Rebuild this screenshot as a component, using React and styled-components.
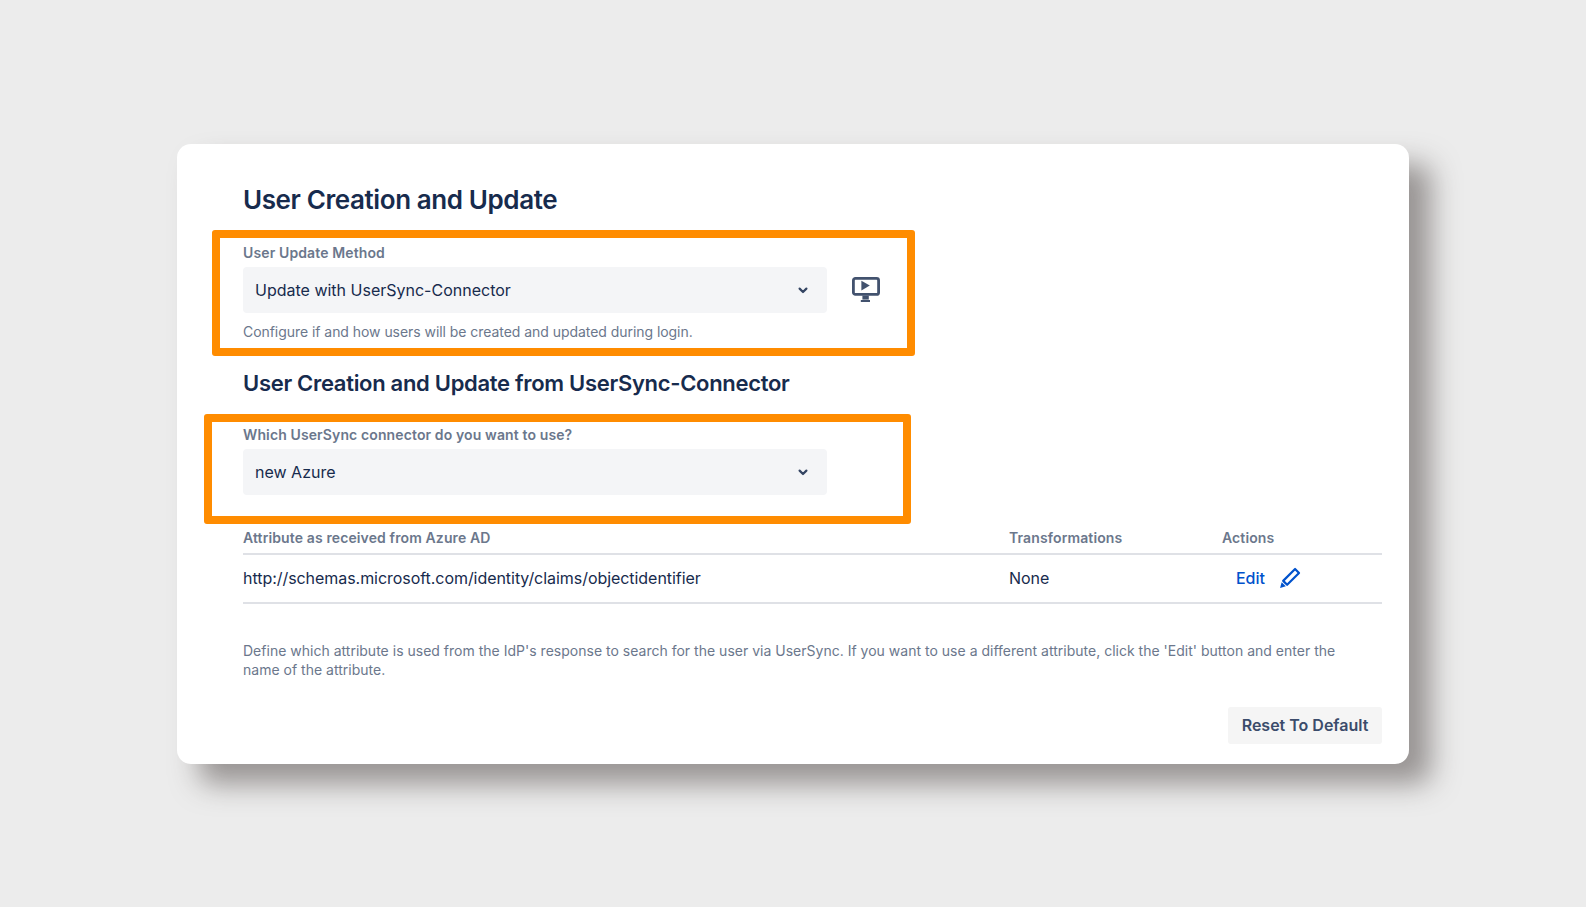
import React from 'react';
import styled, { createGlobalStyle } from 'styled-components';

const GlobalStyle = createGlobalStyle`
  html, body {
    margin: 0;
    padding: 0;
    background: #ececec;
    font-family: Inter, "Liberation Sans", sans-serif;
    color: #172b4d;
    -webkit-font-smoothing: antialiased;
  }
`;

const Page = styled.div`
  min-height: 100vh;
  display: flex;
  align-items: center;
  justify-content: center;
`;

const Card = styled.div`
  width: 1232px;
  height: 620px;
  box-sizing: border-box;
  padding: 36px 27px 0 66px;
  background: #fff;
  border-radius: 14px;
  box-shadow: 22px 20px 28px rgba(70, 62, 60, 0.5);
`;

const Title = styled.h1`
  margin: 0 0 10px;
  font-size: 26px;
  line-height: 40px;
  font-weight: 600;
  letter-spacing: -0.4px;
  color: #172b4d;
`;

const SubTitle = styled.h2`
  margin: 7px 0 11px;
  font-size: 22px;
  line-height: 40px;
  font-weight: 600;
  letter-spacing: -0.3px;
  color: #172b4d;
`;

const Highlight = styled.div`
  box-sizing: border-box;
  width: ${(p) => p.$width}px;
  height: ${(p) => p.$height}px;
  margin-left: -${(p) => p.$inset}px;
  padding-left: ${(p) => p.$inset - 8}px;
  padding-top: ${(p) => p.$top}px;
  border: 8px solid #ff8c00;
  border-radius: 3px;
`;

const FieldLabel = styled.label`
  display: block;
  font-size: 14px;
  line-height: 20px;
  font-weight: 600;
  letter-spacing: 0.12px;
  color: #6b778c;
`;

const FieldRow = styled.div`
  display: flex;
  align-items: center;
  gap: 25px;
  margin-top: 4px;
`;

const SelectBox = styled.div`
  width: 584px;
  height: 46px;
  box-sizing: border-box;
  padding: 0 12px;
  display: flex;
  align-items: center;
  justify-content: space-between;
  background: #f4f5f7;
  border-radius: 4px;
  font-size: 16px;
  color: #172b4d;
`;

const HelpText = styled.p`
  margin: 0;
  font-size: 14px;
  line-height: 19px;
  letter-spacing: -0.05px;
  color: #6b778c;
`;

const FieldHelp = styled(HelpText)`
  margin-top: 9px;
`;

const TableHead = styled.div`
  display: grid;
  grid-template-columns: 766px 213px 1fr;
  height: 25px;
  align-items: start;
  border-bottom: 2px solid #dfe1e6;
  margin-top: 4px;
  font-size: 14px;
  line-height: 20px;
  font-weight: 600;
  letter-spacing: 0.12px;
  color: #6b778c;
`;

const TableRow = styled.div`
  display: grid;
  grid-template-columns: 766px 213px 1fr;
  height: 47px;
  align-items: center;
  border-bottom: 2px solid #dfe1e6;
  font-size: 16px;
  letter-spacing: -0.05px;
  color: #172b4d;
`;

const EditCell = styled.div`
  display: flex;
  align-items: center;
  gap: 14px;
  padding-left: 14px;
`;

const EditLink = styled.a`
  color: #0052cc;
  font-size: 16px;
  font-weight: 500;
`;

const Note = styled(HelpText)`
  margin-top: 37px;
  max-width: 1120px;
  letter-spacing: 0.01px;
`;

const ButtonRow = styled.div`
  display: flex;
  justify-content: flex-end;
  margin-top: 28px;
`;

const Button = styled.button`
  height: 37px;
  width: 154px;
  padding: 0;
  border: 0;
  border-radius: 3px;
  background: #f5f5f5;
  color: #3b4c6b;
  font-family: inherit;
  font-size: 16px;
  font-weight: 600;
`;

const Chevron = () => (
  <svg width="24" height="24" viewBox="0 0 24 24" fill="none">
    <path d="M8.6 10.6 12 14l3.4-3.4" stroke="#344563" strokeWidth="2.2" strokeLinecap="round" strokeLinejoin="round" />
  </svg>
);

const MonitorPlay = () => (
  <svg width="28" height="26" viewBox="0 0 28 26" fill="none">
    <rect x="1.4" y="1.4" width="25.2" height="16" rx="2" stroke="#42526e" strokeWidth="2.8" />
    <path d="M9.4 3.8 17.8 8.6 9.4 13.4z" fill="#42526e" />
    <path d="M10.4 18.6h6.4v4h-6.4z" fill="#42526e" />
    <path d="M8.8 23h9.2v2h-9.2z" fill="#42526e" />
  </svg>
);

const Pencil = () => (
  <svg width="22" height="22" viewBox="0 0 20 20" fill="none">
    <path d="M14.6 1.8 18.2 5.4 7.4 16.2 3.8 12.6z" stroke="#0052cc" strokeWidth="2" strokeLinejoin="round" />
    <path d="M1 19l1.4-5.2 3.8 3.8z" fill="#0052cc" />
  </svg>
);

export default function App() {
  return (
    <>
      <GlobalStyle />
      <Page>
        <Card>
          <Title>User Creation and Update</Title>
          <Highlight $width={703} $height={126} $inset={31} $top={5}>
            <FieldLabel>User Update Method</FieldLabel>
            <FieldRow>
              <SelectBox>
                Update with UserSync-Connector
                <Chevron />
              </SelectBox>
              <MonitorPlay />
            </FieldRow>
            <FieldHelp>
              Configure if and how users will be created and updated during login.
            </FieldHelp>
          </Highlight>
          <SubTitle>User Creation and Update from UserSync-Connector</SubTitle>
          <Highlight $width={707} $height={110} $inset={39} $top={3}>
            <FieldLabel>Which UserSync connector do you want to use?</FieldLabel>
            <FieldRow>
              <SelectBox>
                new Azure
                <Chevron />
              </SelectBox>
            </FieldRow>
          </Highlight>
          <TableHead>
            <span>Attribute as received from Azure AD</span>
            <span>Transformations</span>
            <span>Actions</span>
          </TableHead>
          <TableRow>
            <span>http://schemas.microsoft.com/identity/claims/objectidentifier</span>
            <span>None</span>
            <EditCell>
              <EditLink>Edit</EditLink>
              <Pencil />
            </EditCell>
          </TableRow>
          <Note>
            Define which attribute is used from the IdP's response to search for the user via UserSync. If you want to use a different attribute, click the 'Edit' button and enter the name of the attribute.
          </Note>
          <ButtonRow>
            <Button>Reset To Default</Button>
          </ButtonRow>
        </Card>
      </Page>
    </>
  );
}
